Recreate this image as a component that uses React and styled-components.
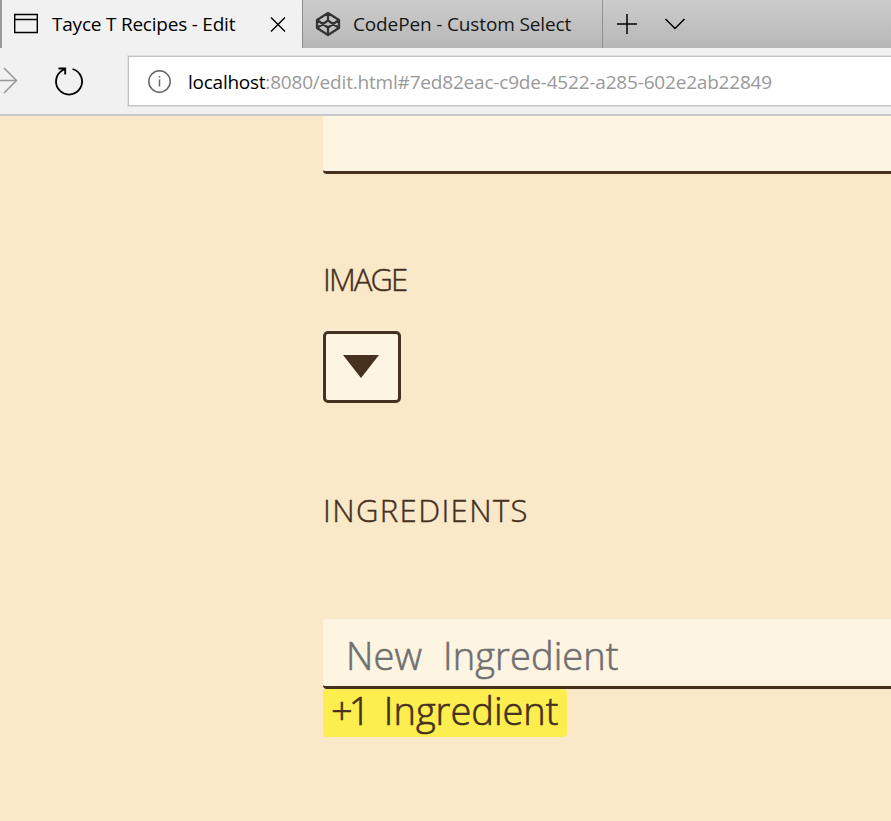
import React from 'react';
import styled, { createGlobalStyle } from 'styled-components';

const Global = createGlobalStyle`
  * { box-sizing: border-box; }
  body { margin: 0; overflow: hidden; }
`;

const Window = styled.div`
  display: flex;
  flex-direction: column;
  width: 100%;
  height: 100vh;
  overflow: hidden;
  background: #f9e9c9;
  font-family: "Open Sans", "Noto Sans", sans-serif;
`;

const TabStrip = styled.div`
  display: flex;
  flex: none;
  height: 48px;
  background: linear-gradient(#cccccc, #b7b7b7);
  border-left: 2px solid #999;
`;

const Tab = styled.div`
  display: flex;
  align-items: center;
  width: ${(p) => (p.$active ? 300 : 301)}px;
  padding-left: ${(p) => (p.$active ? 11 : 11.5)}px;
  padding-right: 16px;
  background: ${(p) => (p.$active ? '#f1f1f1' : 'transparent')};
  border-left: ${(p) => (p.$active ? 'none' : '1px solid #8d8d8d')};
  border-right: ${(p) => (p.$active ? 'none' : '1px solid #929292')};
`;

const TabTitle = styled.span`
  flex: 1;
  margin-left: ${(p) => (p.$active ? 13 : 12.5)}px;
  font-size: 19px;
  line-height: 26px;
  letter-spacing: ${(p) => (p.$active ? '-0.22px' : '-0.14px')};
  white-space: nowrap;
  color: ${(p) => (p.$active ? '#000' : '#161616')};
`;

const StripActions = styled.div`
  display: flex;
  align-items: center;
  gap: 26px;
  padding-left: 13px;
`;

const Icon = styled.svg`
  display: block;
  flex: none;
  fill: none;
  stroke: ${(p) => p.$color || '#000'};
  stroke-width: ${(p) => p.$weight || 1.5};
`;

const Toolbar = styled.div`
  display: flex;
  flex: none;
  align-items: center;
  height: 68px;
  background: #f1f1f1;
  border-bottom: 2px solid #c9c9c9;
`;

const Reload = styled(Icon)`
  margin: 0 43px 0 36px;
`;

const AddressBar = styled.div`
  display: flex;
  flex: 1;
  align-items: center;
  height: 52px;
  padding-left: 18px;
  background: #fff;
  border: 1px solid #dedede;
  border-right: 0;
  box-shadow: inset 1px 1px #c3c3c3, inset 0 -1px #c3c3c3;
`;

const Url = styled.span`
  margin-left: 16px;
  padding-top: 2px;
  font-size: 19px;
  line-height: 26px;
  letter-spacing: -0.19px;
  white-space: nowrap;
  color: #999;
`;

const Host = styled.span`
  letter-spacing: -0.25px;
  color: #000;
`;

const Form = styled.main`
  display: flex;
  flex-direction: column;
  align-items: flex-start;
  padding-left: 323px;
  font-weight: 300;
  color: #46301e;
`;

const Field = styled.div`
  width: 100%;
  height: ${(p) => p.$height}px;
  margin-top: ${(p) => p.$top || 0}px;
  padding-left: 23px;
  overflow: hidden;
  background: #fdf4e2;
  border-bottom: 3px solid #46301e;
  border-radius: ${(p) => (p.$cut ? '0 0 0 4px' : '4px 0 0 4px')};
`;

const Label = styled.div`
  height: 40px;
  margin-top: ${(p) => p.$top}px;
  font-size: 31px;
  line-height: 40px;
  letter-spacing: ${(p) => p.$spacing}px;
  -webkit-text-stroke: 0.45px currentColor;
`;

const SelectButton = styled.button`
  display: flex;
  justify-content: center;
  width: 78px;
  height: 72px;
  margin-top: 32px;
  padding: 21px 2px 0 0;
  background: #fdf4e2;
  border: 3px solid #46301e;
  border-radius: 5px;
  box-shadow: -1px -1px 1px #fdf4e2;
`;

const Arrow = styled.span`
  width: 0;
  height: 0;
  border: solid transparent;
  border-width: 23px 18px 0;
  border-top-color: #46301e;
`;

const Placeholder = styled.span`
  display: block;
  margin-top: 9px;
  font-size: 38px;
  line-height: 54px;
  letter-spacing: 0.1px;
  word-spacing: 11px;
  white-space: nowrap;
  color: #707070;
  -webkit-text-stroke: 0.6px currentColor;
`;

const AddButton = styled.button`
  width: 244px;
  height: 48px;
  padding: 0 0 5px 8px;
  border: 0;
  border-radius: 4px;
  background: #fcee4e;
  color: inherit;
  font: 300 38px/43px "Open Sans", sans-serif;
  text-align: left;
  white-space: nowrap;
  -webkit-text-stroke: 0.6px currentColor;
`;

const Count = styled.span`
  display: inline-block;
  width: 43px;
  letter-spacing: -4px;
`;

export default function App() {
  return (
    <Window>
      <Global />
      <TabStrip>
        <Tab $active>
          <Icon width="26" height="22" viewBox="0 0 26 22" $weight={1.4}>
            <path d="M1.7 1.5H24.3V19.5H1.7ZM1.7 6.5H24.3" />
          </Icon>
          <TabTitle $active>Tayce T Recipes - Edit</TabTitle>
          <Icon width="16" height="16" viewBox="0 0 16 16" $weight={1.4}>
            <path d="M1 1.5L15 15.5M15 1.5L1 15.5" />
          </Icon>
        </Tab>
        <Tab>
          <Icon width="26" height="26" viewBox="0 0 26 26" $color="#333" $weight={2.3}>
            <path strokeLinejoin="round" d="M13 2L24 9V17L13 24L2 17V9ZM13 2V9.5M13 24V16.5M2 9L13 16.5L24 9M2 17L13 9.5L24 17" />
          </Icon>
          <TabTitle>CodePen - Custom Select</TabTitle>
        </Tab>
        <StripActions>
          <Icon width="22" height="22" viewBox="0 0 22 22">
            <path d="M11 1V21M1 11H21" />
          </Icon>
          <Icon width="22" height="14" viewBox="0 0 22 14">
            <path d="M1.5 2L11 11.5L20.5 2" />
          </Icon>
        </StripActions>
      </TabStrip>
      <Toolbar>
        <Icon width="18" height="28" viewBox="0 0 18 28" $color="#999">
          <path d="M0 13.5H17M4 1L16.5 13.5L4 26" />
        </Icon>
        <Reload width="30" height="30" viewBox="0 0 30 30" $weight={1.8}>
          <path d="M18.5 3A13 13 0 1 1 8.5 4.3L11 3M4.5 2.5H11.2V8.5" />
        </Reload>
        <AddressBar>
          <Icon width="26" height="26" viewBox="0 0 26 26" $color="#666">
            <circle cx="13.5" cy="13.5" r="10.7" />
            <path d="M13.5 11.5V18.5M13.5 8V9.5" />
          </Icon>
          <Url><Host>localhost</Host>:8080/edit.html#7ed82eac-c9de-4522-a285-602e2ab22849</Url>
        </AddressBar>
      </Toolbar>
      <Form>
        <Field $height={58} $cut />
        <Label $top={85} $spacing={-1.9}>IMAGE</Label>
        <SelectButton aria-label="Choose image"><Arrow /></SelectButton>
        <Label $top={87} $spacing={1.4}>INGREDIENTS</Label>
        <Field $height={70} $top={89}>
          <Placeholder>New Ingredient</Placeholder>
        </Field>
        <AddButton><Count>+1</Count> Ingredient</AddButton>
      </Form>
    </Window>
  );
}
